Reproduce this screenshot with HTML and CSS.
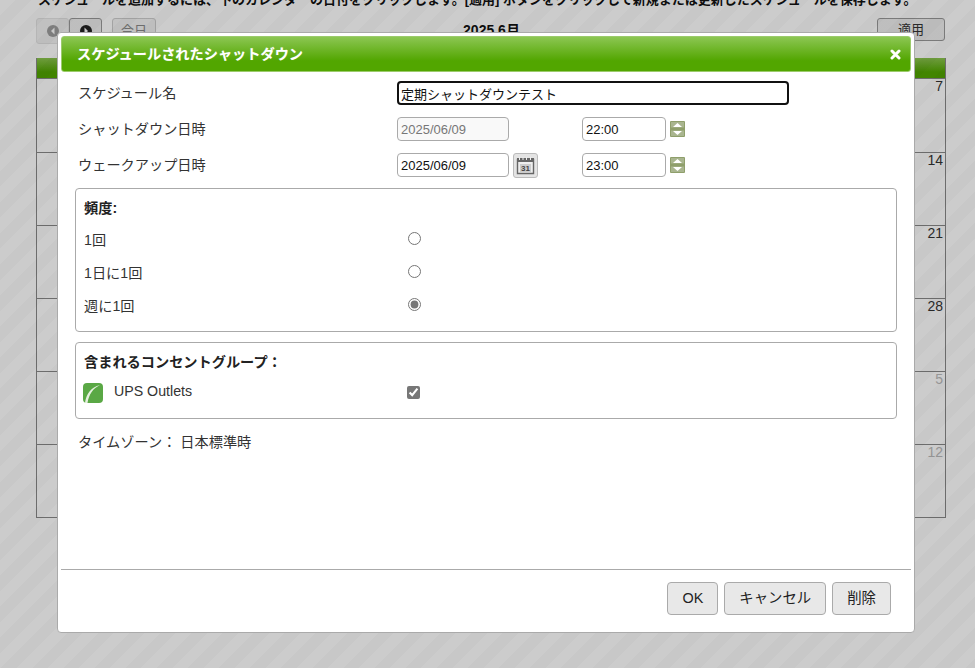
FILE: index.html
```html
<!DOCTYPE html>
<html lang="ja">
<head>
<meta charset="utf-8">
<title>スケジュールされたシャットダウン</title>
<link rel="stylesheet" href="styles.css">
</head>
<body>
<div class="page">
  <p class="hint">スケジュールを追加するには、下のカレンダーの日付をクリックします。[適用] ボタンをクリックして新規または更新したスケジュールを保存します。</p>
  <div class="toolbar">
    <div class="nav">
      <button class="nav-btn"><svg width="14" height="14" viewBox="0 0 14 14"><circle cx="7" cy="7" r="6" fill="#888"/><path d="M8.500 3.500 5 7l3.500 3.500z" fill="#fff"/></svg></button>
      <button class="nav-btn"><svg width="14" height="14" viewBox="0 0 14 14"><circle cx="7" cy="7" r="6" fill="#222"/><path d="M5.500 3.500 9 7l-3.500 3.500z" fill="#fff"/></svg></button>
    </div>
    <button class="today">今日</button>
    <strong class="month">2025 6月</strong>
    <button class="apply">適用</button>
  </div>
  <div class="calendar">
    <div class="cal-head"></div>
    <div class="cal-row"><span>7</span></div>
    <div class="cal-row"><span>14</span></div>
    <div class="cal-row"><span>21</span></div>
    <div class="cal-row"><span>28</span></div>
    <div class="cal-row"><span class="other">5</span></div>
    <div class="cal-row"><span class="other">12</span></div>
  </div>
</div>
<div class="overlay"></div>
<div class="dialog">
  <header class="title"><span>スケジュールされたシャットダウン</span><svg class="close" width="11" height="11" viewBox="0 0 11 11"><path d="M2 2l7 7M9 2l-7 7" stroke="#fff" stroke-width="3" stroke-linecap="round"/></svg></header>
  <div class="body">
    <div class="rows">
      <div class="row">
        <label class="lbl">スケジュール名</label>
        <input class="inp name" type="text" value="定期シャットダウンテスト">
      </div>
      <div class="row">
        <label class="lbl">シャットダウン日時</label>
        <input class="inp date off" type="text" value="2025/06/09" disabled>
        <span class="cal-gap"></span>
        <input class="inp time" type="text" value="22:00">
        <svg class="spin" width="15" height="16" viewBox="0 0 15 16"><rect width="15" height="16" rx="1" fill="#8f9f6b"/><path d="M1 1h13v5.500H1z" fill="#a9b58f"/><path d="M1 9.500h13V15H1z" fill="#a9b58f"/><path d="M7.500 2 12 6H3z" fill="#fff"/><path d="M7.500 14 12 10H3z" fill="#fff"/></svg>
      </div>
      <div class="row">
        <label class="lbl">ウェークアップ日時</label>
        <input class="inp date" type="text" value="2025/06/09">
        <button class="cal-btn"><svg width="19" height="19" viewBox="0 0 19 19"><path d="M1.500 3.500h16v14h-16z" fill="#eee" stroke="#666" stroke-width="1.400"/><path d="M1 2h17v4H1z" fill="#666"/><path d="M3.500 1v3M7 1v3M10.500 1v3M14.500 1v3" stroke="#eee"/><rect x="4" y="8" width="11" height="8" fill="#ccc"/><text x="9.500" y="15" class="cal-day">31</text></svg></button>
        <input class="inp time" type="text" value="23:00">
        <svg class="spin" width="15" height="16" viewBox="0 0 15 16"><rect width="15" height="16" rx="1" fill="#8f9f6b"/><path d="M1 1h13v5.500H1z" fill="#a9b58f"/><path d="M1 9.500h13V15H1z" fill="#a9b58f"/><path d="M7.500 2 12 6H3z" fill="#fff"/><path d="M7.500 14 12 10H3z" fill="#fff"/></svg>
      </div>
    </div>
    <section class="box freq">
      <h3>頻度:</h3>
      <div class="opt"><span>1回</span><input type="radio" name="f"></div>
      <div class="opt"><span>1日に1回</span><input type="radio" name="f"></div>
      <div class="opt"><span>週に1回</span><input type="radio" name="f" checked></div>
    </section>
    <section class="box groups">
      <h3>含まれるコンセントグループ：</h3>
      <div class="outlet">
        <svg class="leaf" width="20" height="20" viewBox="0 0 20 20"><rect width="20" height="20" rx="4" fill="#5aa845"/><path d="M2 20C3 11 8 4 17 2 10 5.500 6 11 4.500 20z" fill="#e6f0df"/></svg>
        <span class="outlet-name">UPS Outlets</span>
        <input type="checkbox" checked>
      </div>
    </section>
    <p class="tz"><span>タイムゾーン：</span><span>日本標準時</span></p>
  </div>
  <footer class="foot">
    <button class="btn">OK</button>
    <button class="btn">キャンセル</button>
    <button class="btn">削除</button>
  </footer>
</div>
</body>
</html>
```
FILE: styles.css
```css
* { box-sizing: border-box; }
html, body { height: 100%; }
body {
  margin: 0;
  overflow: hidden;
  background: #fff;
  color: #333;
  font: 14.200px/20px "Liberation Sans", "Noto Sans CJK JP", sans-serif;
}
button { font: inherit; color: inherit; }
.page { padding: 0 30px 0 36px; }
.hint {
  margin: -10px 0 0 2px;
  height: 21px;
  font-weight: bold;
  font-size: 13px;
  color: #111;
  white-space: nowrap;
}
.toolbar {
  display: flex;
  align-items: flex-start;
  margin-top: 7px;
  height: 30px;
}
.nav { display: flex; }
.nav-btn {
  width: 33px;
  height: 26px;
  padding: 0;
  border: 1px solid #999;
  background: #eee;
  border-radius: 3px;
  display: flex;
  align-items: center;
  justify-content: center;
}
.nav-btn:first-child { border-color: #ddd; opacity: .8; }
.today {
  width: 44px;
  height: 26px;
  padding: 0;
  margin-left: 10px;
  border: 1px solid #ccc;
  border-radius: 3px;
  background: #f2f2f2;
  color: #888;
  font-size: 13px;
}
.month {
  flex: 1;
  text-align: center;
  font-size: 14px;
  color: #111;
  line-height: 24px;
  padding-right: 50px;
}
.apply {
  width: 68px;
  height: 23px;
  padding: 0;
  border: 1px solid #999;
  border-radius: 3px;
  background: #eee;
  font-size: 13px;
  line-height: 20px;
}
.calendar {
  margin-top: 10px;
  width: 910px;
  height: 460px;
  border: 1px solid #888;
  border-top: 0;
}
.cal-head {
  height: 20px;
  background: linear-gradient(#8bc34f, #52a600 70%);
}
.cal-row {
  height: 73px;
  border-top: 1px solid #888;
  text-align: right;
  padding-right: 2px;
  font-size: 14px;
  line-height: 14px;
}
.cal-head + .cal-row { height: 74px; }
.other { color: #bbb; }
.overlay {
  position: absolute;
  inset: 0;
  background: repeating-linear-gradient(135deg, rgba(0,0,0,.2) 0 11px, rgba(0,0,0,.215) 11px 22px);
}
.dialog {
  position: absolute;
  left: 57px;
  top: 32px;
  width: 858px;
  height: 601px;
  background: #fff;
  border: 1px solid #aaa;
  border-radius: 4px;
  padding: 3px 3px 0;
  display: flex;
  flex-direction: column;
}
.title {
  height: 36px;
  flex: none;
  display: flex;
  align-items: center;
  justify-content: space-between;
  padding: 0 9px 0 15px;
  border-radius: 3px;
  border: 1px solid #9ccb6c;
  background: linear-gradient(#8cc653, #52a600 70%);
  color: #fff;
  font-weight: bold;
  text-shadow: 0 0 1px rgba(255,255,255,.3);
}
.body {
  flex: 1;
  padding: 9px 14px 0;
}
.rows { display: flex; flex-direction: column; gap: 12px; }
.row {
  display: flex;
  align-items: center;
  height: 24px;
  padding-left: 3px;
}
.lbl { width: 319px; flex: none; }
.inp {
  height: 24px;
  border: 1px solid #aaa;
  border-radius: 4px;
  padding: 0 3px;
  background: #fff;
  color: #111;
  font: 13px "Liberation Sans", "Noto Sans CJK JP", sans-serif;
}
.name {
  width: 392px;
  border: 2px solid #111;
  border-radius: 4px;
  padding: 0 2px;
  outline: 0;
}
.date { width: 112px; }
.off { background: #f9f9f9; color: #777; }
.cal-gap { width: 73px; flex: none; }
.cal-btn {
  width: 25px;
  height: 25px;
  margin: 0 44px 0 4px;
  padding: 0;
  flex: none;
  display: flex;
  align-items: center;
  justify-content: center;
  background: #e4e4e4;
  border: 1px solid #bbb;
  border-radius: 3px;
}
.cal-day {
  font: bold 8px "Liberation Sans", sans-serif;
  fill: #444;
  text-anchor: middle;
}
.time { width: 84px; }
.spin { margin-left: 4px; flex: none; }
.box {
  margin-top: 11px;
  border: 1px solid #aaa;
  border-radius: 4px;
  padding: 9px 7px 0 8px;
}
.box h3 { margin: 0; font-size: 14.200px; line-height: 20px; font-weight: bold; color: #222; }
.freq { height: 144px; }
.groups { margin-top: 10px; height: 77px; }
.opt {
  display: flex;
  align-items: center;
  height: 33px;
}
.opt span { width: 324px; flex: none; margin-bottom: 2px; }
.freq h3 { margin-bottom: 6px; }
.opt input { margin: 0 0 4px; width: 13px; height: 13px; accent-color: #777; }
.outlet {
  display: flex;
  align-items: center;
  margin-top: 11px;
  margin-left: -1px;
}
.leaf { flex: none; }
.outlet-name { width: 293px; margin-left: 11px; flex: none; position: relative; top: -2px; font-size: 14.200px; }
.outlet input { margin: -1px 0 0; width: 13px; height: 13px; accent-color: #777; }
.tz {
  margin: 13px 0 0 3px;
  display: flex;
  gap: 4px;
}
.foot {
  flex: none;
  height: 63px;
  border-top: 1px solid #aaa;
  display: flex;
  justify-content: flex-end;
  align-items: flex-start;
  gap: 6px;
  padding: 12px 20px 0 0;
}
.btn {
  height: 33px;
  padding: 0 14px 2px;
  border: 1px solid #aaa;
  border-radius: 4px;
  background: #e8e8e8;
  color: #222;
  font-size: 14.400px;
}
```
